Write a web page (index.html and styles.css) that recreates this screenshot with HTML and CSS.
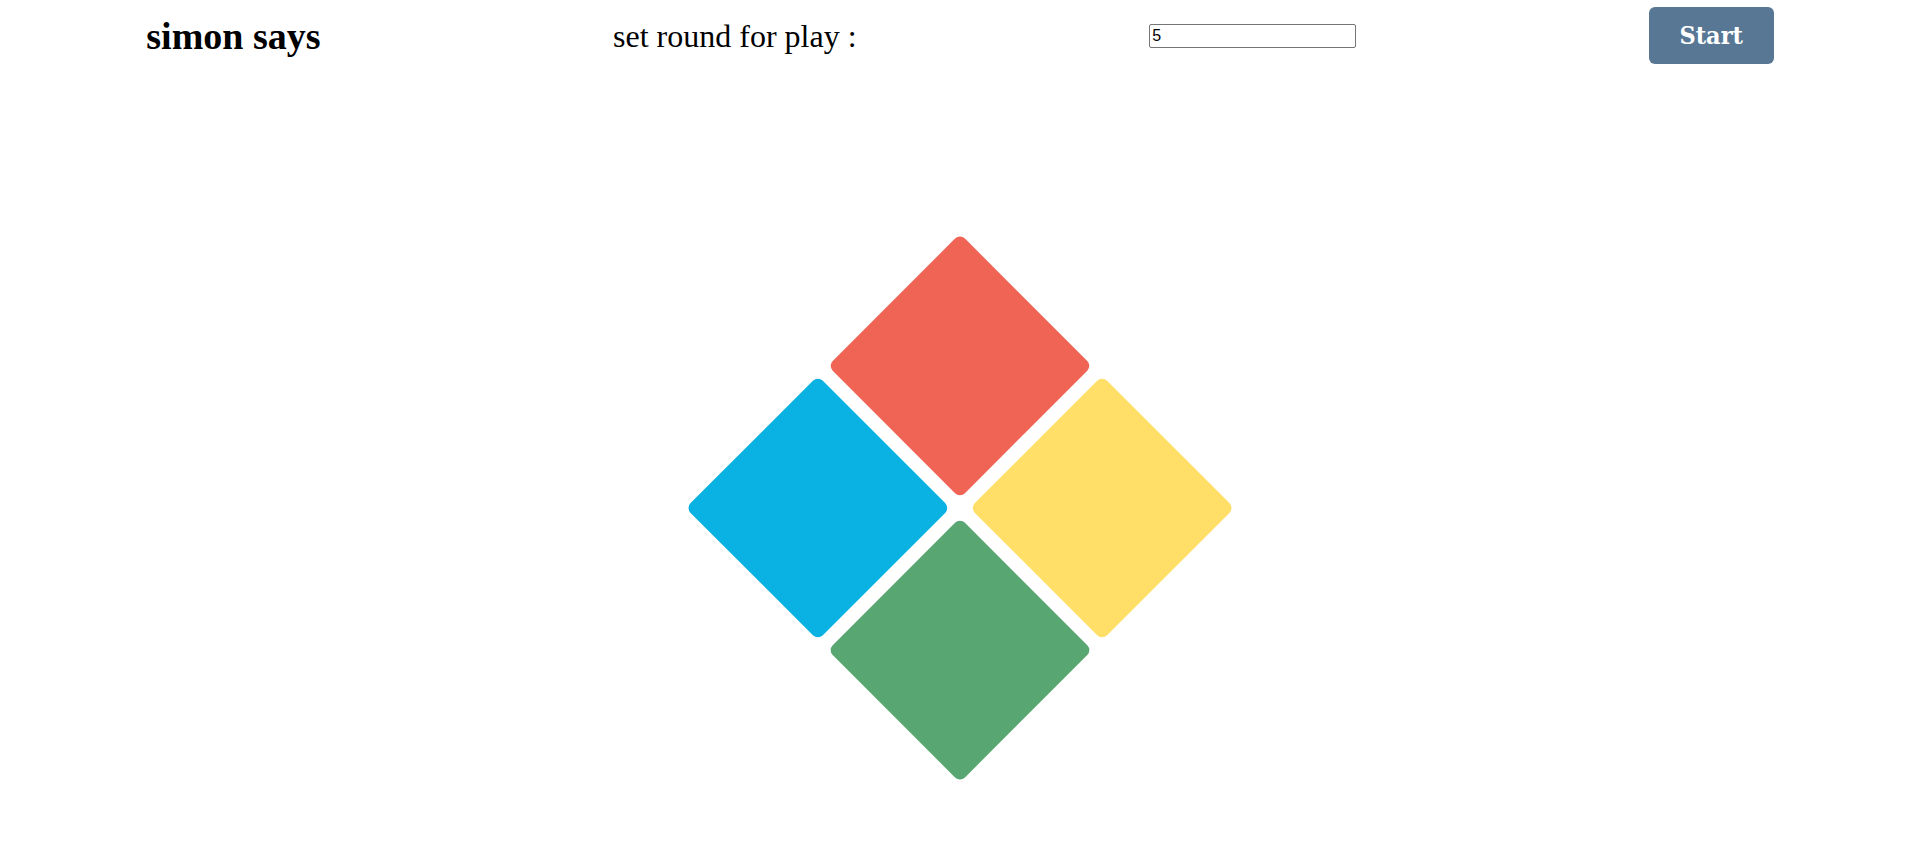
FILE: index.html
```html
<!DOCTYPE html>
<html lang="en">
<head>
<meta charset="utf-8">
<title>simon says</title>
<link rel="stylesheet" href="styles.css">
</head>
<body>
<header class="topbar">
  <h1 class="title">simon says</h1>
  <label class="round-label" for="rounds">set round for play :</label>
  <input class="round-input" id="rounds" type="text" value="5">
  <button class="start-btn" type="button">Start</button>
</header>
<main class="stage">
  <div class="board-wrap">
    <div class="board">
      <div class="pad pad-red"></div>
      <div class="pad pad-yellow"></div>
      <div class="pad pad-blue"></div>
      <div class="pad pad-green"></div>
    </div>
  </div>
</main>
</body>
</html>
```
FILE: styles.css
```css
html, body {
  margin: 0;
  padding: 0;
  background: #fff;
}
body {
  font-family: "Liberation Serif", "Times New Roman", serif;
  color: #000;
}
.topbar {
  height: 72px;
  display: flex;
  align-items: center;
  justify-content: space-around;
}
.title {
  margin: 0;
  font-size: 38px;
  font-weight: bold;
  line-height: 1;
}
.round-label {
  font-size: 32px;
  line-height: 1;
}
.round-input {
  font-family: "Liberation Sans", Arial, sans-serif;
  font-size: 16px;
  width: 207px;
  height: 24px;
  box-sizing: border-box;
  padding: 1px 2px;
  border: 1px solid #767676;
  border-radius: 2px;
  margin: 0;
}
.start-btn {
  width: 125px;
  height: 57px;
  border: none;
  border-radius: 6px;
  background: #577794;
  color: #fff;
  font-family: "DejaVu Serif", serif;
  font-stretch: condensed;
  font-weight: bold;
  font-size: 25px;
  padding: 0;
  margin-top: -1px;
}
.stage {
  display: flex;
  justify-content: center;
  padding-top: 162px;
}
.board-wrap {
  width: 548px;
  height: 548px;
  display: flex;
  align-items: center;
  justify-content: center;
}
.board {
  width: 388px;
  height: 388px;
  display: grid;
  grid-template-columns: 1fr 1fr;
  grid-template-rows: 1fr 1fr;
  gap: 14px;
  transform: rotate(45deg);
  flex: none;
}
.pad {
  border-radius: 7px;
}
.pad-red { background: #ef6455; }
.pad-yellow { background: #ffdf67; }
.pad-blue { background: #09b2e2; }
.pad-green { background: #58a772; }
```
